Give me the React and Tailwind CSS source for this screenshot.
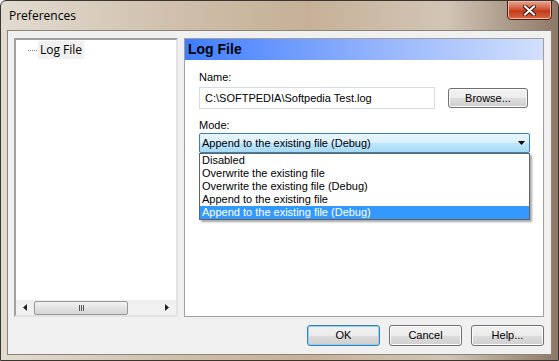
import React from "react";

const items = [
  "Disabled",
  "Overwrite the existing file",
  "Overwrite the existing file (Debug)",
  "Append to the existing file",
  "Append to the existing file (Debug)",
];

function WinButton({ label, primary, className = "" }) {
  return (
    <div
      className={
        "flex items-center justify-center rounded-[3px] border text-[11px] text-black " +
        (primary
          ? "border-[#3c7fb1] shadow-[inset_0_0_0_1px_#8fd0f5] "
          : "border-[#707070] shadow-[inset_0_0_0_1px_#fcfcfc] ") +
        "bg-[linear-gradient(to_bottom,#f2f2f2_0%,#ebebeb_50%,#dddddd_51%,#cfcfcf_100%)] " +
        className
      }
    >
      {label}
    </div>
  );
}

export default function App() {
  return (
    <div
      className="relative flex h-[361px] w-[559px] flex-col overflow-hidden rounded-t-[6px] border border-[#3a3530] bg-[linear-gradient(to_right,#e2dbd1_0%,#cdbca7_35%,#c6b198_55%,#d2c5b5_80%,#8c7868_100%)]"
      style={{ fontFamily: '"Liberation Sans", Arial, sans-serif' }}
    >
      {/* title bar */}
      <div className="relative flex h-[29px] shrink-0 items-center pl-[8px]">
        <span className="text-[12px] text-black" style={{ fontFamily: '"Open Sans", "Liberation Sans", sans-serif' }}>
          Preferences
        </span>
        <div className="absolute right-[6px] top-[-1px] flex h-[20px] w-[45px] items-center justify-center rounded-b-[4px] border border-[#5a1c10] bg-[linear-gradient(to_bottom,#e8a58f_0%,#d0593c_45%,#c2381a_55%,#d76a45_100%)] shadow-[inset_0_0_0_1px_#f0b8a6]">
          <svg width="13" height="11" viewBox="0 0 13 11">
            <path d="M2 1.5 L11 9.5 M11 1.5 L2 9.5" stroke="#3a1a10" strokeWidth="4" strokeLinecap="square" />
            <path d="M2 1.5 L11 9.5 M11 1.5 L2 9.5" stroke="#ffffff" strokeWidth="2" strokeLinecap="square" />
          </svg>
        </div>
      </div>

      {/* client area */}
      <div className="mx-[6px] mb-[7px] flex flex-1 flex-col border border-[#8d8479] bg-[#f0f0f0] pb-[8px] pl-[6px] pr-[7px] pt-[7px]">
        <div className="flex h-[279px] gap-[6px]">
          {/* tree */}
          <div className="flex w-[164px] shrink-0 flex-col border-2 border-b-[#e3e3e3] border-l-[#a0a0a0] border-r-[#e3e3e3] border-t-[#a0a0a0] bg-white">
            <div className="flex-1 pt-[1px]">
              <div className="flex items-center">
                <div className="ml-[12px] w-[9px] border-t border-dotted border-[#808080]" />
                <span className="ml-[1px] flex h-[18px] items-center bg-[#f0f0f0] px-[2px] text-[12px] text-black" style={{ fontFamily: '"Open Sans", "Liberation Sans", sans-serif' }}>
                  Log File
                </span>
              </div>
            </div>
            <div className="flex h-[15px] items-center bg-[#f0f0f0]">
              <div className="flex w-[18px] justify-center">
                <svg width="4" height="7" viewBox="0 0 4 7">
                  <path d="M4 0 L0 3.5 L4 7 Z" fill="#202020" />
                </svg>
              </div>
              <div className="flex h-[14px] w-[94px] items-center justify-center rounded-[2px] border border-[#979797] bg-[linear-gradient(to_bottom,#f3f3f3,#e2e2e2_50%,#d6d6d6)]">
                <div className="flex gap-[1px]">
                  <div className="h-[6px] w-[1px] bg-[#555]" />
                  <div className="h-[6px] w-[1px] bg-[#555]" />
                  <div className="h-[6px] w-[1px] bg-[#555]" />
                </div>
              </div>
              <div className="flex-1" />
              <div className="flex w-[18px] justify-center">
                <svg width="4" height="7" viewBox="0 0 4 7">
                  <path d="M0 0 L4 3.5 L0 7 Z" fill="#202020" />
                </svg>
              </div>
            </div>
          </div>

          {/* right panel */}
          <div className="relative flex min-w-0 flex-1 flex-col border border-[#a0a0a0] bg-white">
            <div className="flex h-[21px] items-center bg-[linear-gradient(to_right,#3f7dff_0%,#8fb0fb_50%,#d2e0fd_100%)] pl-[3px] text-[14px] font-bold text-black">
              Log File
            </div>
            <div className="flex flex-col px-[14px]">
              <div className="mt-[10px] h-[14px] text-[11px] leading-[14px] text-black">Name:</div>
              <div className="mt-[3px] flex items-center gap-[13px]">
                <div className="flex h-[22px] w-[236px] items-center border border-[#d5dbe2] px-[5px] text-[11px] text-black">
                  C:\SOFTPEDIA\Softpedia Test.log
                </div>
                <WinButton label="Browse..." className="h-[20px] w-[80px]" />
              </div>
              <div className="mt-[9px] h-[14px] text-[11px] leading-[14px] text-black">Mode:</div>
              <div className="relative mt-[1px] w-[331px]">
                <div className="flex h-[20px] items-center justify-between rounded-[2px] border border-[#3c7fb1] bg-[linear-gradient(to_bottom,#eaf6fd_0%,#d9f0fc_50%,#bee6fd_51%,#a7d9f5_100%)] pl-[2px] pr-[4px] text-[11px] text-black">
                  <span>Append to the existing file (Debug)</span>
                  <svg width="7" height="4" viewBox="0 0 7 4">
                    <path d="M0 0 L7 0 L3.5 4 Z" fill="#000" />
                  </svg>
                </div>
                <div className="absolute left-0 top-[20px] z-10 w-[331px] border border-[#646464] bg-white shadow-[2px_2px_2px_rgba(0,0,0,0.35)]">
                  {items.map((it, i) => (
                    <div
                      key={it}
                      className={
                        "flex h-[13px] items-center pl-[2px] text-[11px] " +
                        (i === items.length - 1 ? "bg-[#3399ff] text-white" : "text-black")
                      }
                    >
                      {it}
                    </div>
                  ))}
                </div>
              </div>
            </div>
          </div>
        </div>

        {/* buttons */}
        <div className="mt-[8px] flex justify-end gap-[9px]">
          <WinButton label="OK" primary className="h-[21px] w-[73px]" />
          <WinButton label="Cancel" className="h-[21px] w-[73px]" />
          <WinButton label="Help..." className="h-[21px] w-[73px]" />
        </div>
      </div>
    </div>
  );
}
